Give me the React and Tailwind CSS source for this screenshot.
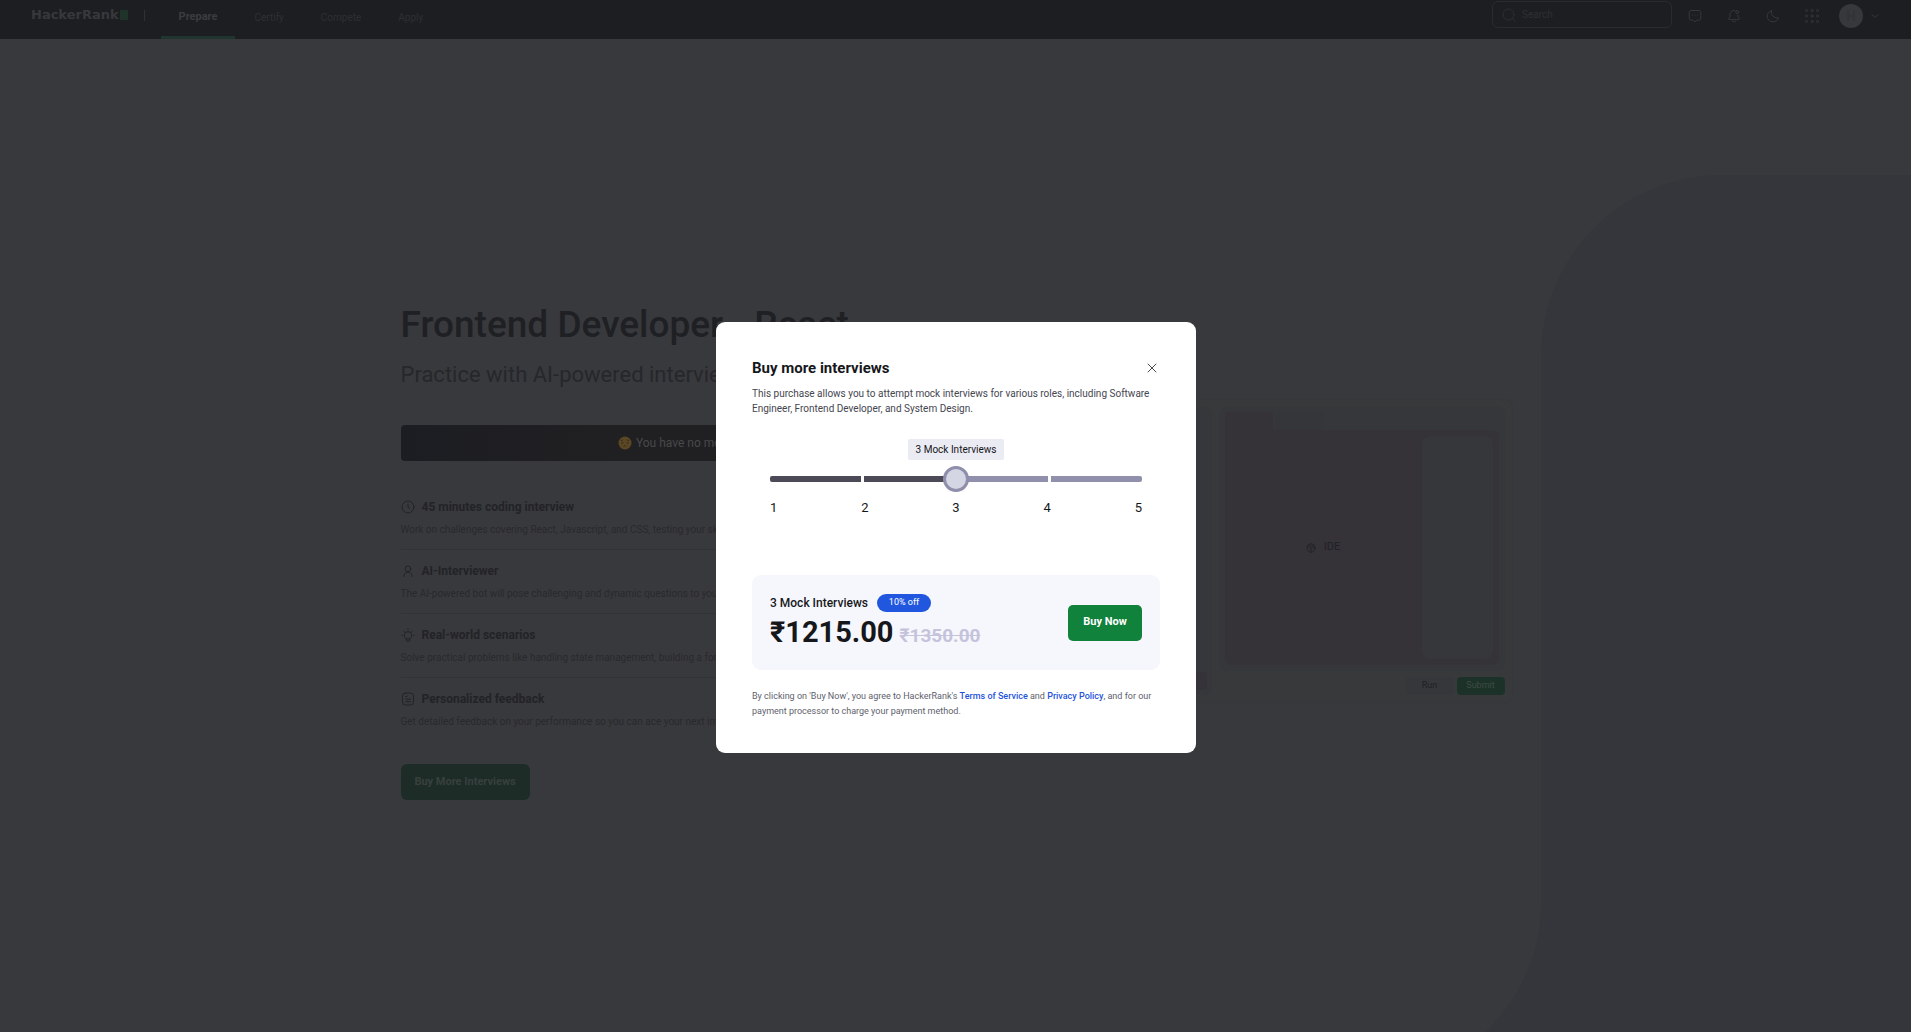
import { useState } from "react";

const NAV_ITEMS = ["Certify", "Compete", "Apply"];

const stroke = {
  fill: "none",
  stroke: "currentColor",
  strokeWidth: 1,
  strokeLinecap: "round",
  strokeLinejoin: "round",
};

function ClockIcon() {
  return (
    <svg viewBox="0 0 14 14" className="size-3.5" {...stroke}>
      <circle cx="7" cy="7" r="6" />
      <path d="M7 3.8V7l1.8 1.9" />
    </svg>
  );
}

function PersonIcon() {
  return (
    <svg viewBox="0 0 14 14" className="size-3.5" {...stroke}>
      <circle cx="7" cy="4.7" r="2.8" />
      <path d="M2.8 12.5c.2-2.600 1.900-4.300 4.200-4.300s4 1.700 4.200 4.300" />
    </svg>
  );
}

function BulbIcon() {
  return (
    <svg viewBox="0 0 14 14" className="size-3.5" {...stroke}>
      <path d="M5.200 10.800C3.800 10 3.200 8.800 3.200 7.400a3.800 3.800 0 0 1 7.600 0c0 1.400-.6 2.600-2 3.400v1.400c0 .5-.3.900-.8.900H6c-.5 0-.8-.4-.8-.9zM5.200 10.800h3.600" />
      <path d="M7 1v.8M2.500 3l.5.5M11.500 3l-.5.5M1 7.400h.5M12.500 7.400h.5" />
    </svg>
  );
}

function ReportIcon() {
  return (
    <svg viewBox="0 0 14 14" className="size-3.5" {...stroke}>
      <rect x="1.500" y="1" width="11" height="12" rx="3" />
      <path d="M4.500 4.500l.7.6 1.200-1.300M5 7.200h4.500M5 9.700h4.500" />
    </svg>
  );
}

const FEATURES = [
  {
    icon: ClockIcon,
    title: "45 minutes coding interview",
    text: "Work on challenges covering React, Javascript, and CSS, testing your skills",
  },
  {
    icon: PersonIcon,
    title: "AI-Interviewer",
    text: "The AI-powered bot will pose challenging and dynamic questions to you",
  },
  {
    icon: BulbIcon,
    title: "Real-world scenarios",
    text: "Solve practical problems like handling state management, building a form",
  },
  {
    icon: ReportIcon,
    title: "Personalized feedback",
    text: "Get detailed feedback on your performance so you can ace your next interview",
  },
];

function Header() {
  return (
    <header className="flex h-[39px] items-start justify-between bg-[#1d1e22] pr-8 pl-[31px] text-[#2e2f33]">
      <div className="flex">
        <a
          href="#home"
          className="flex h-[30px] items-center gap-px font-['DejaVu_Sans',sans-serif] text-[13px] font-bold text-[#37383c]"
        >
          HackerRank
          <span className="h-2.5 w-2 bg-[#1e342b]" />
        </a>
        <span className="mt-2.5 ml-4 h-[11px] w-px bg-[#303135]" />
        <nav className="ml-4 flex h-[39px] gap-px text-[10px]">
          <a
            href="#prepare"
            className="flex items-center border-b-3 border-[#20352d] px-[18px] pb-0.5 text-[11px] font-bold text-[#3b3c40]"
          >
            Prepare
          </a>
          {NAV_ITEMS.map((n) => (
            <a key={n} href={"#" + n} className="flex items-center px-[18px] pb-1">
              {n}
            </a>
          ))}
        </nav>
      </div>
      <div className="flex items-center">
        <label className="mt-px flex h-[27px] w-45 items-center gap-1.5 rounded-md border border-[#2a2b2f] px-[9px]">
          <svg viewBox="0 0 14 14" className="size-3.5 shrink-0" {...stroke}>
            <circle cx="6.500" cy="6.500" r="5.500" />
            <path d="M10.700 10.700L13 13" />
          </svg>
          <input
            aria-label="Search"
            placeholder="Search"
            className="w-full min-w-0 bg-transparent text-[10px] outline-none placeholder:text-[#2e2f33]"
          />
        </label>
        <div className="mt-[3px] ml-4 flex items-center gap-[25px] text-[#37383c]">
          <button aria-label="Messages">
            <svg viewBox="0 0 14 14" className="size-3.5" {...stroke}>
              <path d="M3 1.500h8c1.100 0 1.800.7 1.800 1.800v6c0 1.100-.7 1.800-1.800 1.800H9.400L7 12.700l-2.400-1.600H3c-1.100 0-1.800-.7-1.800-1.800v-6C1.200 2.200 1.900 1.500 3 1.500z" />
              <path d="M4.500 6.200h.1M7 6.200h.1M9.500 6.200h.1" />
            </svg>
          </button>
          <button aria-label="Notifications">
            <svg viewBox="0 0 14 14" className="size-3.5" {...stroke}>
              <path d="M7.500 1.500C4.800 1.200 3 3 3 5.500v2.300L1.700 9.700c-.2.500 0 .9.500.9h9.600c.5 0 .7-.4.500-.9L11 7.800V6.200M5.500 12.200c.8.800 2.200.8 3 0" />
              <circle cx="10.200" cy="3" r="1.500" />
            </svg>
          </button>
          <button aria-label="Dark theme">
            <svg viewBox="0 0 14 14" className="size-3.5" {...stroke}>
              <path d="M5.500 1.800C4.700 5.800 7.500 9.300 12.600 8.800 11.700 11.300 9.500 12.900 7 12.900c-3.300 0-5.900-2.600-5.900-5.700 0-2.500 1.700-4.700 4.400-5.400z" />
            </svg>
          </button>
          <button aria-label="Apps">
            <svg viewBox="0 0 14 14" className="size-3.5" {...stroke} strokeWidth={0.800}>
              {[1.500, 7, 12.500].map((y) =>
                [1.500, 7, 12.500].map((x) => <circle key={x + "-" + y} cx={x} cy={y} r="1.100" />)
              )}
            </svg>
          </button>
        </div>
        <button aria-label="Account" className="mt-1 ml-5 flex items-center gap-2 text-[#37383c]">
          <span className="flex size-6 items-center justify-center rounded-full bg-[#37383c] text-sm font-bold text-[#323337]">
            H
          </span>
          <svg viewBox="0 0 8 8" className="size-2" {...stroke}>
            <path d="M1 2.500l3 3 3-3" />
          </svg>
        </button>
      </div>
    </header>
  );
}

function IdePreview() {
  return (
    <div className="mt-[98px] flex h-[304px] gap-[7px] rounded-lg border border-[#35373a] bg-[#37393b] p-[7px] text-[#1f2024]">
      <div className="flex flex-1 flex-col justify-end rounded-lg bg-[#35373b] p-[5px]">
        <span className="h-[18px] rounded bg-[#353338]" />
      </div>
      <div className="flex w-[286px] flex-col gap-1.5">
        <div className="flex flex-1 flex-col rounded-lg bg-[#35373b] p-1.5 pt-[5px]">
          <div className="flex h-[18px] gap-[3px]">
            <span className="w-12 rounded-t bg-[#353338]" />
            <span className="w-12 rounded-t bg-[#34363a]" />
          </div>
          <div className="flex flex-1 rounded-lg rounded-tl-none bg-[#353338] p-1.5 pl-0">
            <div className="flex flex-1 items-center justify-center gap-2 text-[11px]">
              <svg viewBox="0 0 12 12" className="size-2.5" {...stroke}>
                <circle cx="6" cy="6" r="5" />
                <path d="M6 11V6.500L2 4.200M6 6.500l4-2.300M3.500 2.500l2.500 1.500 2.500-1.500" />
              </svg>
              IDE
            </div>
            <div className="w-[71px] rounded-lg bg-[#35373b]" />
          </div>
        </div>
        <div className="flex h-[18px] justify-end gap-[3px] text-[9px]">
          <button className="w-12 rounded bg-[#36373a]">Run</button>
          <button className="w-12 rounded bg-[#1c3229] text-[#3e4b45]">Submit</button>
        </div>
      </div>
    </div>
  );
}

function Page() {
  return (
    <main className="relative flex-1">
      <svg
        viewBox="0 0 431 857"
        preserveAspectRatio="none"
        className="absolute right-0 bottom-0 h-[857px] w-[431px]"
        aria-hidden="true"
      >
        <path d="M431 0H242A181 181 0 0 0 61 181V736A176 176 0 0 1 5 857H431Z" fill="#35363b" />
      </svg>
      <div className="relative mx-auto grid w-full max-w-[1114px] grid-cols-[628fr_464fr] gap-5 pt-[262px] pl-0.5">
        <div className="min-w-0 whitespace-nowrap">
          <h1 className="text-[37px] leading-12 font-medium text-[#1f2024]">
            Frontend Developer - React
          </h1>
          <p className="mt-2.5 text-[22px] leading-8 text-[#26272b]">
            Practice with AI-powered interviews
          </p>
          <div className="mt-[34px] flex h-9 items-center justify-center gap-1 overflow-hidden rounded bg-linear-to-r from-[#1c1d22] to-[#202022] to-35% text-xs text-[#47484b]">
            <svg viewBox="0 0 14 14" className="size-3.5" aria-hidden="true">
              <circle cx="7" cy="7" r="6.500" fill="#5c4724" />
              <path
                d="M3 6.500c.7.800 1.800.8 2.500 0M8.500 6.500c.7.800 1.800.8 2.500 0M5.500 10.300c.8-.8 2.200-.8 3 0M3 4.800l2-1M11 4.800l-2-1"
                fill="none"
                stroke="#2f2519"
                strokeWidth="0.800"
              />
            </svg>
            You have no mock interviews left
          </div>
          <ul className="mt-[25px] divide-y divide-[#323337]">
            {FEATURES.map(({ icon: Icon, title, text }) => (
              <li key={title} className="py-[11px]">
                <h2 className="flex items-center gap-[7px] text-xs leading-5 font-bold text-[#222327]">
                  <Icon />
                  {title}
                </h2>
                <p className="mt-[5px] text-[10px] leading-4 text-[#28292d]">{text}</p>
              </li>
            ))}
          </ul>
          <button className="mt-[23px] h-9 w-[129px] rounded-md bg-[#1d2c27] text-[11px] font-bold text-[#38403e]">
            Buy More Interviews
          </button>
        </div>
        <IdePreview />
      </div>
    </main>
  );
}

function CountSlider({ count, onChange }) {
  return (
    <div className="mx-[18px] mt-[23px]">
      <div className="flex justify-center">
        <output
          htmlFor="count"
          className="flex h-[21px] w-24 items-center justify-center rounded-xs bg-[#ebebf3] text-[10px] text-[#16171b]"
        >
          {count} Mock Interviews
        </output>
      </div>
      <div className="relative mt-[5px] flex h-[27px] items-center">
        <div className="flex h-1.5 w-full gap-[3px] overflow-hidden rounded-xs">
          {[1, 2, 3, 4].map((n) => (
            <span
              key={n}
              className={n < count ? "flex-1 bg-[#4c4a57]" : "flex-1 bg-[#9190ac]"}
            />
          ))}
        </div>
        <input
          id="count"
          type="range"
          min="1"
          max="5"
          value={count}
          onChange={(e) => onChange(Number(e.target.value))}
          aria-label="Number of mock interviews"
          className="absolute inset-0 w-full appearance-none bg-transparent [&::-webkit-slider-thumb]:size-[26px] [&::-webkit-slider-thumb]:appearance-none [&::-webkit-slider-thumb]:rounded-full [&::-webkit-slider-thumb]:border-3 [&::-webkit-slider-thumb]:border-[#8f8eab] [&::-webkit-slider-thumb]:bg-[#d5d6e4]"
        />
      </div>
      <div className="mt-1.5 flex justify-between text-[13px] leading-5 text-[#16171b]">
        {[1, 2, 3, 4, 5].map((n) => (
          <span key={n}>{n}</span>
        ))}
      </div>
    </div>
  );
}

function BuyDialog() {
  const [count, setCount] = useState(3);
  const full = count * 450;
  return (
    <div className="fixed inset-0 flex items-start justify-center overflow-auto pt-[322px] pl-px">
      <section
        role="dialog"
        aria-labelledby="buy-title"
        className="w-120 rounded-[9px] bg-white p-9 pb-[34px] text-[#16171b]"
      >
        <div className="flex items-center justify-between">
          <h2 id="buy-title" className="text-[15px] leading-5 font-bold">
            Buy more interviews
          </h2>
          <button aria-label="Close" className="mr-[3px] text-[#4c4d55]">
            <svg viewBox="0 0 10 10" className="size-2.5" {...stroke}>
              <path d="M1 1l8 8M9 1L1 9" />
            </svg>
          </button>
        </div>
        <p className="mt-2 text-[10px] leading-[15px] text-[#45464f]">
          This purchase allows you to attempt mock interviews for various roles, including Software
          Engineer, Frontend Developer, and System Design.
        </p>
        <CountSlider count={count} onChange={setCount} />
        <div className="mt-[57px] flex h-[95px] items-center justify-between rounded-[9px] bg-[#f6f7fd] px-[18px]">
          <div>
            <div className="flex items-center gap-[9px]">
              <span className="text-xs font-medium">{count} Mock Interviews</span>
              <span className="flex h-[18px] w-[54px] items-center justify-center rounded-full bg-[#2157df] text-[9px] text-white">
                10% off
              </span>
            </div>
            <div className="flex items-baseline gap-1.5 font-bold">
              <span className="text-[29px] leading-10">₹{(full * 0.9).toFixed(2)}</span>
              <s className="text-[19px] text-[#c5c3db]">₹{full.toFixed(2)}</s>
            </div>
          </div>
          <button className="h-9 w-[74px] rounded-[5px] bg-[#11823b] text-[11px] font-bold text-white">
            Buy Now
          </button>
        </div>
        <p className="mt-[19px] text-[9px] leading-[15px] text-[#60616c]">
          By clicking on 'Buy Now', you agree to HackerRank's{" "}
          <a href="#terms" className="font-medium text-[#1f53dc]">
            Terms of Service
          </a>{" "}
          and{" "}
          <a href="#privacy" className="font-medium text-[#1f53dc]">
            Privacy Policy
          </a>
          , and for our payment processor to charge your payment method.
        </p>
      </section>
    </div>
  );
}

export default function App() {
  return (
    <div className="flex min-h-screen flex-col overflow-hidden bg-[#38393c] font-['Roboto',sans-serif]">
      <Header />
      <Page />
      <BuyDialog />
    </div>
  );
}
